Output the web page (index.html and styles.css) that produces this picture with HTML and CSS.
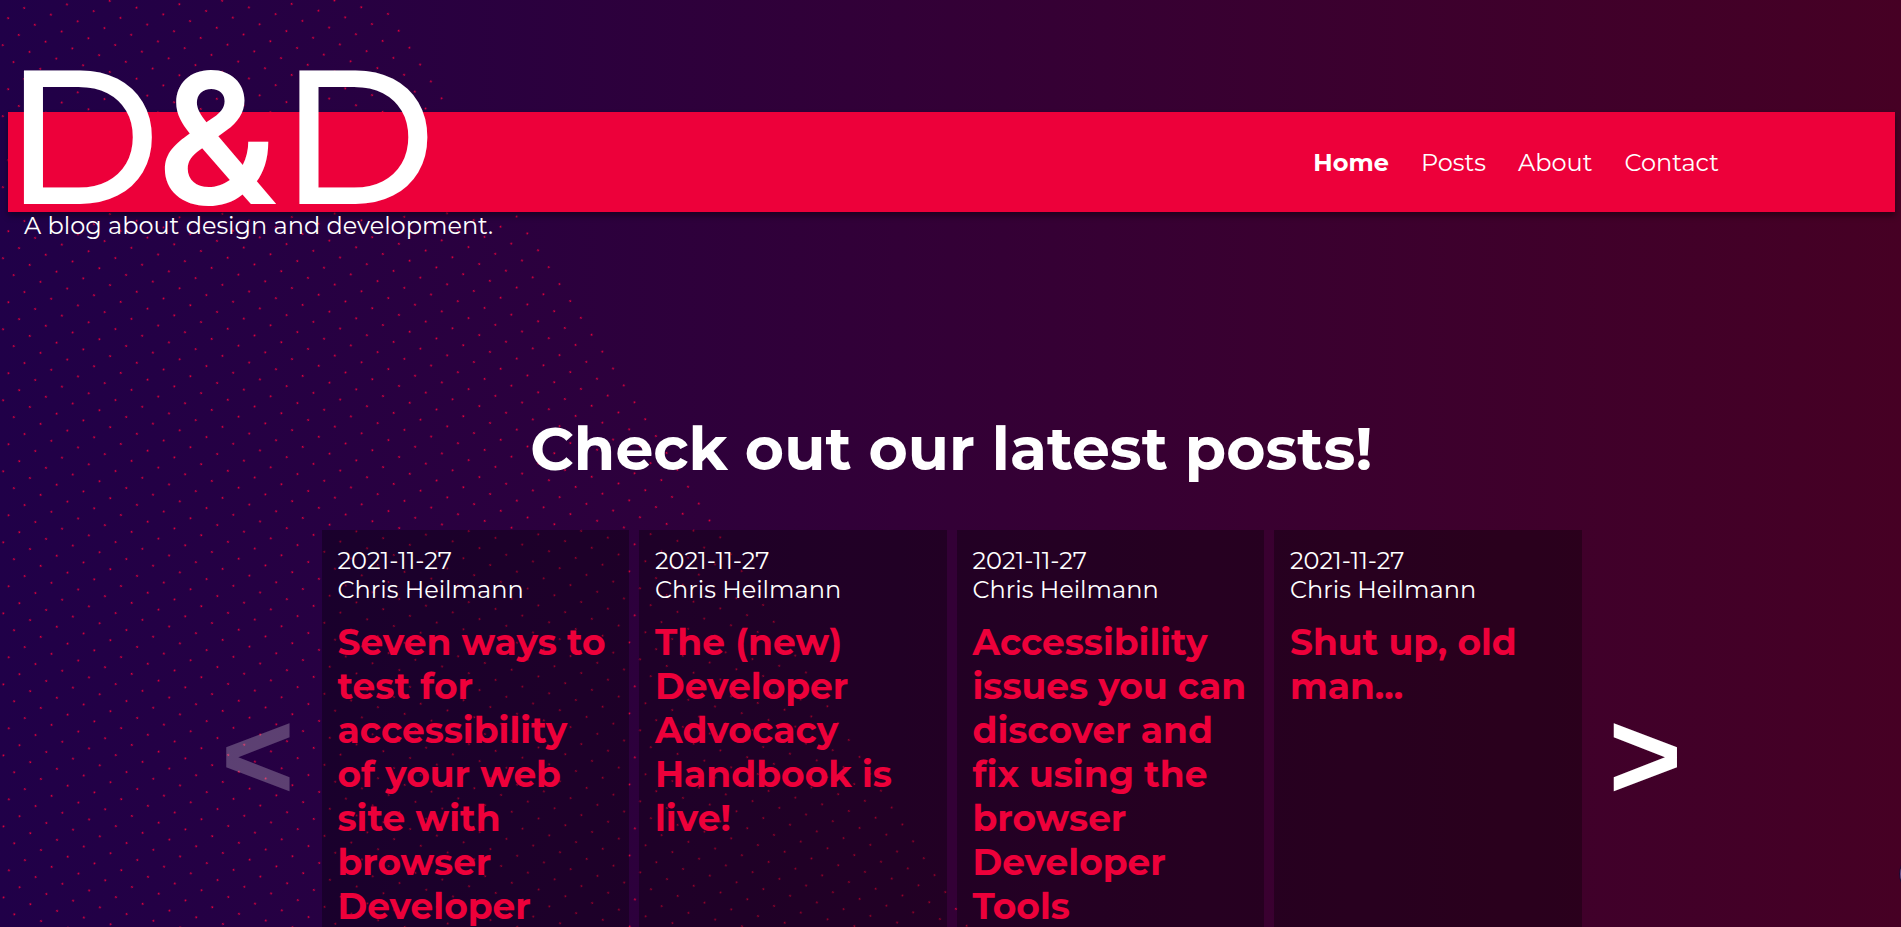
FILE: index.html
```
<!DOCTYPE html>
<html lang="en">
<head>
<meta charset="utf-8">
<meta name="viewport" content="width=device-width, initial-scale=1">
<title>D&amp;D - A blog about design and development</title>
<link rel="stylesheet" href="styles.css">
</head>
<body>
<svg class="dots" aria-hidden="true">
  <defs>
    <pattern id="dot" width="19" height="20" patternUnits="userSpaceOnUse">
      <circle cx="9.5" cy="10" r="0.9"/>
    </pattern>
  </defs>
  <g transform="translate(709.5 520.5) rotate(-32.4)">
    <g transform="translate(-9.5 -10)">
      <rect x="-1900" y="-2000" width="1919" height="4000" fill="url(#dot)"/>
    </g>
  </g>
</svg>
<header class="bar">
  <h1 class="logo">D<span class="amp">&amp;</span>D</h1>
  <nav class="nav" aria-label="Main">
    <a class="nav-link nav-current" href="#home" aria-current="page">Home</a>
    <a class="nav-link" href="#posts">Posts</a>
    <a class="nav-link" href="#about">About</a>
    <a class="nav-link" href="#contact">Contact</a>
  </nav>
</header>
<p class="tagline">A blog about design and development.</p>
<main>
  <h2 class="heading">Check out our latest posts!</h2>
  <div class="carousel">
    <button class="arrow" type="button" aria-label="Previous posts" disabled>&lt;</button>
    <div class="cards">
      <article class="card">
        <p class="meta"><time>2021-11-27</time><br>Chris Heilmann</p>
        <h3 class="title"><a href="#post-1">Seven ways to test for accessibility of your web site with browser Developer Tools</a></h3>
      </article>
      <article class="card">
        <p class="meta"><time>2021-11-27</time><br>Chris Heilmann</p>
        <h3 class="title"><a href="#post-2">The (new) Developer Advocacy Handbook is live!</a></h3>
      </article>
      <article class="card">
        <p class="meta"><time>2021-11-27</time><br>Chris Heilmann</p>
        <h3 class="title"><a href="#post-3">Accessibility issues you can discover and fix using the browser Developer Tools</a></h3>
      </article>
      <article class="card">
        <p class="meta"><time>2021-11-27</time><br>Chris Heilmann</p>
        <h3 class="title"><a href="#post-4">Shut up, old man...</a></h3>
      </article>
    </div>
    <button class="arrow" type="button" aria-label="Next posts">&gt;</button>
  </div>
</main>
<span class="bubble" aria-hidden="true"></span>
</body>
</html>
```
FILE: styles.css
```
* {
  box-sizing: border-box;
}

html {
  overflow-x: hidden;
}

body {
  position: relative;
  margin: 0;
  padding: 112px 6px 0 8px;
  min-height: 100vh;
  background: linear-gradient(to right, #200048, #460024);
  color: #fff;
  font: 24px/29px Montserrat, "Open Sans", sans-serif;
}

h1, h2, h3, p {
  margin: 0;
}

a {
  color: inherit;
  text-decoration: none;
}

.dots {
  position: absolute;
  inset: 0;
  z-index: -1;
  width: 100%;
  height: 100%;
  fill: #f0003a;
}

.bar {
  display: flex;
  align-items: center;
  justify-content: space-between;
  background: #ed003a;
  box-shadow: 0 4px 6px rgba(0, 0, 0, 0.4);
}

.logo {
  margin: -26px 0 26px -4px;
  font-size: 190px;
  font-weight: 500;
  line-height: 100px;
}

.amp {
  margin: 0 2px 0 -4px;
  font-family: Inter, sans-serif;
  font-size: 182px;
  font-weight: 600;
  line-height: 0;
}

.nav {
  display: flex;
  gap: 32px;
  margin-right: 176px;
}

.nav-current {
  font-weight: 700;
}

.tagline {
  margin: -1px 0 0 16px;
}

.heading {
  margin-top: 172px;
  font-size: 60px;
  line-height: 73px;
  text-align: center;
}

.carousel {
  display: flex;
  align-items: center;
  justify-content: center;
  gap: 27px;
  margin-top: 45px;
}

.arrow {
  border: 0;
  padding: 0;
  background: none;
  color: #fff;
  font-family: "Liberation Sans", Arial, sans-serif;
  font-size: 126px;
  font-weight: 700;
  line-height: 148px;
}

.arrow:disabled {
  opacity: 0.25;
}

.cards {
  display: grid;
  grid-template-columns: repeat(4, 1fr);
  gap: 10px;
  width: 1260px;
}

.card {
  padding: 16px 16px 10px;
  background: rgba(0, 0, 0, 0.32);
}

.title {
  margin-top: 16px;
  color: #ed003a;
  font-size: 36px;
  line-height: 44px;
}

.bubble {
  position: fixed;
  right: -40px;
  top: 853px;
  width: 42px;
  height: 42px;
  border: 1px solid #1c0730;
  border-radius: 50%;
  background: #6b4f8c;
}
```
